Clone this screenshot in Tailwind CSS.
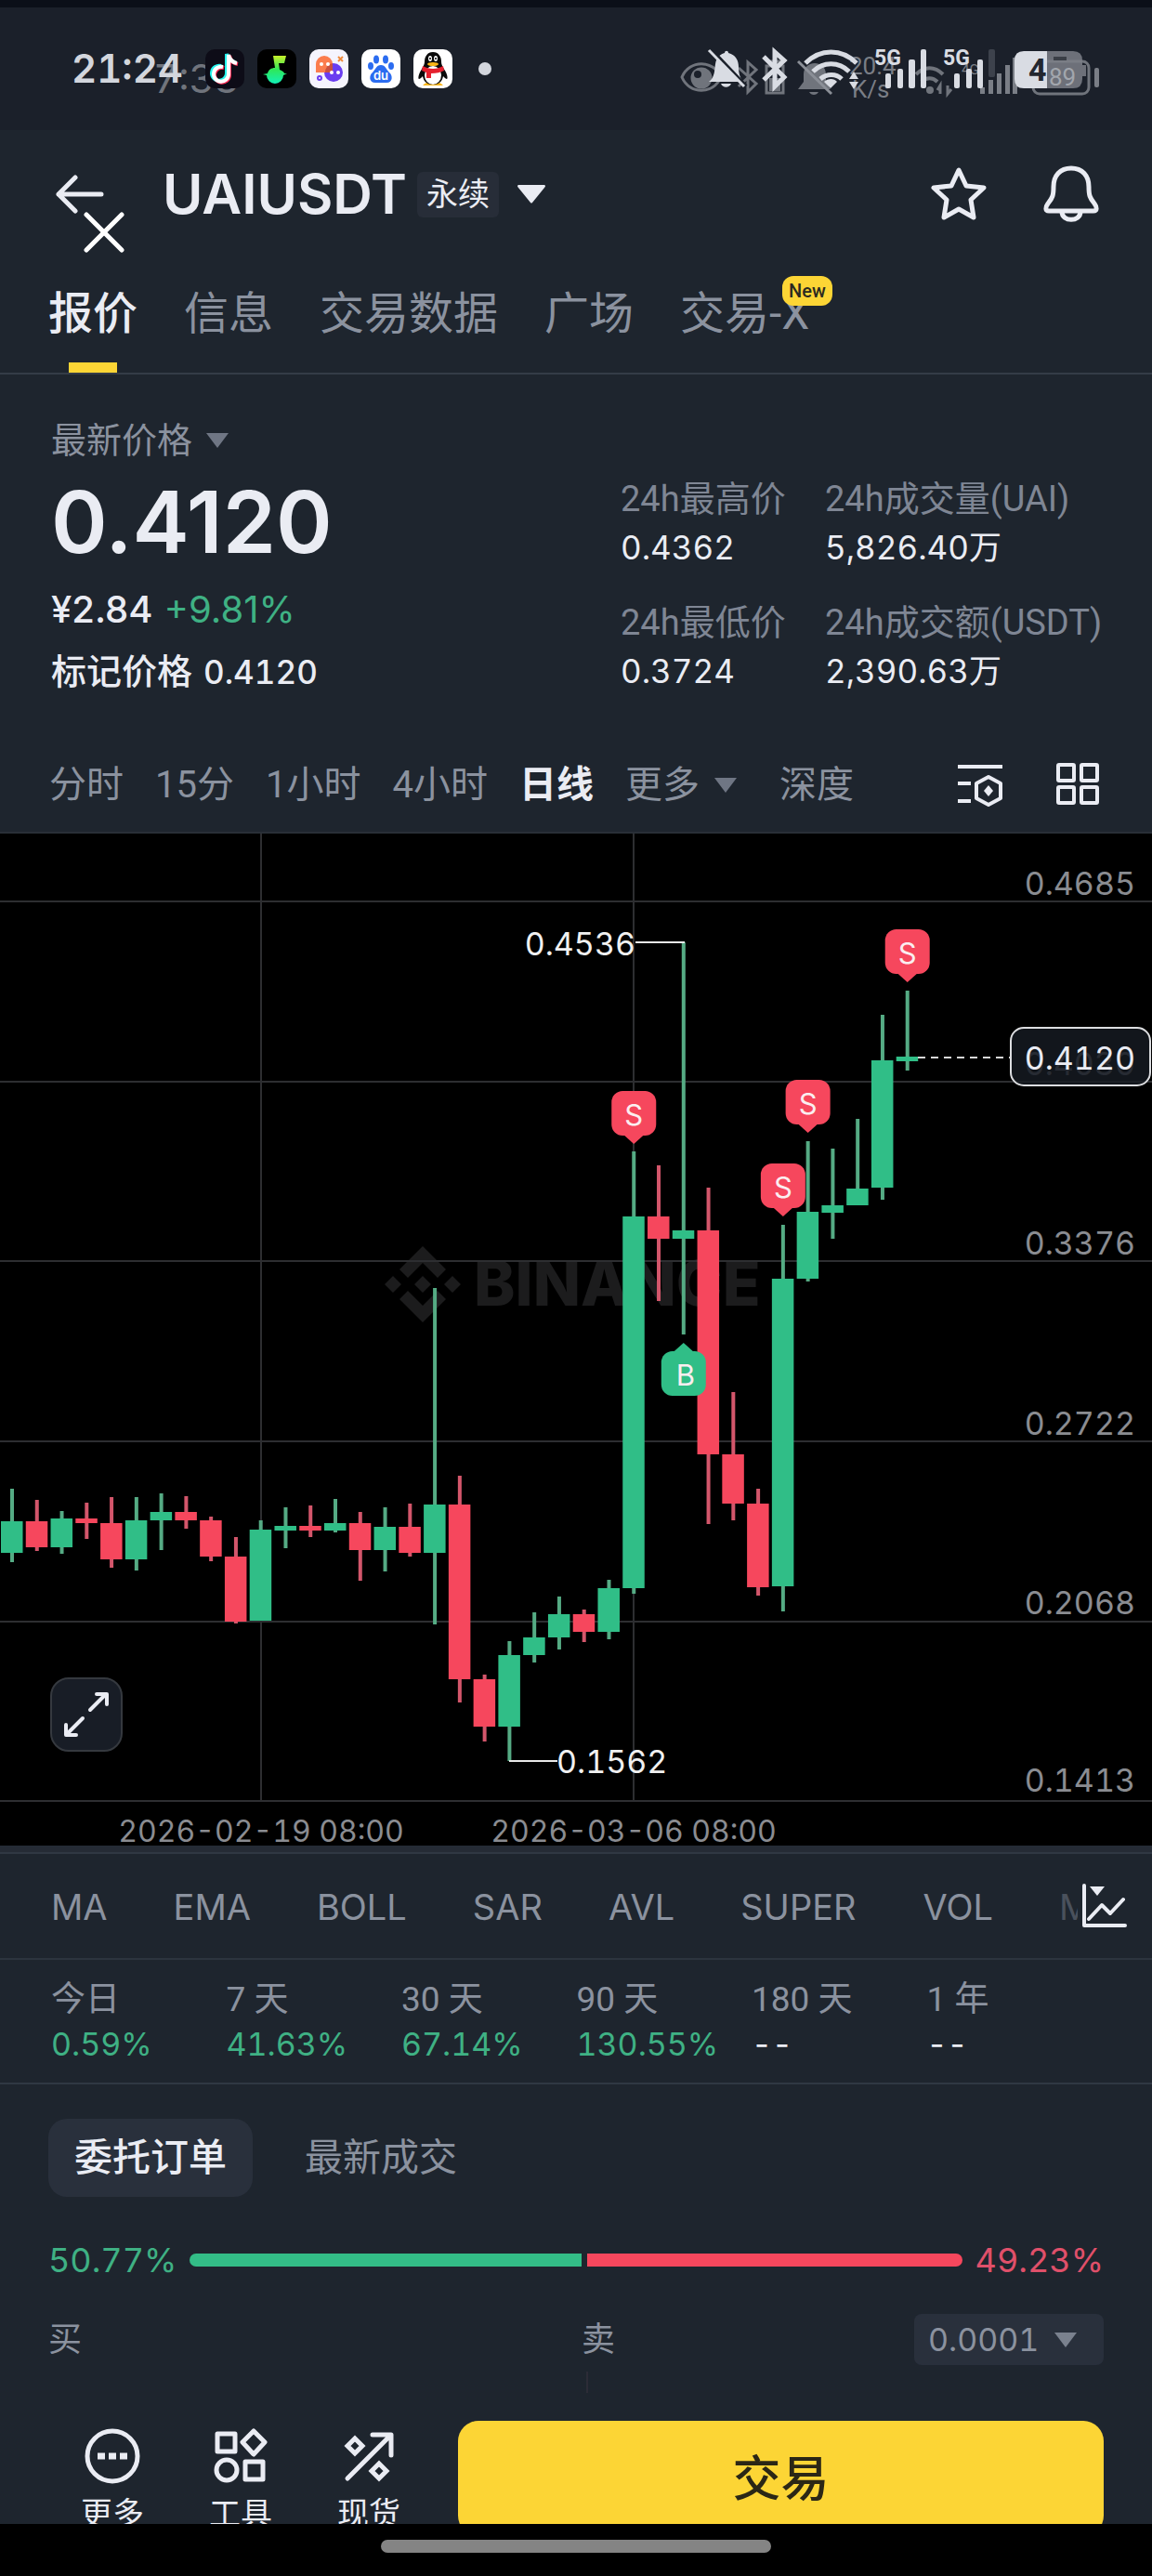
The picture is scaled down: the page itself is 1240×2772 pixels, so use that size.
<!DOCTYPE html>
<html lang="zh-CN">
<head>
  <meta charset="UTF-8">
  <meta name="viewport" content="width=device-width, initial-scale=1.0">
  <title>UAIUSDT 永续</title>
  <script src="https://cdn.jsdelivr.net/npm/@tailwindcss/browser@4"></script>
</head>
<body class="min-h-screen flex flex-col bg-[#1e252e] font-['Roboto','Noto_Sans_CJK_SC',sans-serif] text-[#eaecf3]">

  <!-- Status bar -->
  <div class="h-[140px] shrink-0 border-t-8 border-[#0b0f18] bg-[#1b202a] flex justify-between pl-[77px] pr-[50px] overflow-hidden">
    <div class="flex items-center relative h-[132px]">
      <span class="absolute left-[88px] top-[52px] text-[42px] leading-[50px] text-[#70747c] font-['Inter',sans-serif] tabular-nums">7:33</span>
      <span class="relative w-[144px] text-[42px] leading-[50px] font-semibold text-[#d3d6dd] font-['Inter',sans-serif] tabular-nums">21:24</span>
      <div class="relative flex items-center gap-[14px]">
        <svg class="w-[42px] h-[42px]" viewBox="0 0 42 42"><rect width="42" height="42" rx="10" fill="#0d0c17"/><g fill="none" stroke-width="4"><path d="M19 19a8 8 0 1 0 6 8V6c1 5 4 8 9 9" stroke="#25f4ee" transform="translate(-2 -1)"/><path d="M19 19a8 8 0 1 0 6 8V6c1 5 4 8 9 9" stroke="#fe2c55" transform="translate(1 1)"/><path d="M19 19a8 8 0 1 0 6 8V6c1 5 4 8 9 9" stroke="#fff"/></g></svg>
        <svg class="w-[42px] h-[42px]" viewBox="0 0 42 42"><defs><linearGradient id="note" x1="0" y1="0" x2="0" y2="1"><stop offset="0" stop-color="#c8f02a"/><stop offset=".5" stop-color="#2ee85a"/><stop offset="1" stop-color="#12f0b8"/></linearGradient></defs><rect width="42" height="42" rx="10" fill="#000"/><path d="M17 7h14l-2 8h-6l1 7c3 1 5 3 5 4h3l-4 2a9 9 0 0 1-18 0l-4-1 5-1c1-4 4-6 8-6z" fill="url(#note)"/></svg>
        <svg class="w-[42px] h-[42px]" viewBox="0 0 42 42"><rect width="42" height="42" rx="10" fill="#f5f4fd"/><circle cx="26" cy="25" r="10" fill="#6a3df0"/><path d="M7 25V16a9 9 0 0 1 18 0v5a4 4 0 0 1-4 4z" fill="#fb7d4e"/><path d="M17 25h4a4 4 0 0 0 4-4v-6a10 10 0 0 0-8 10z" fill="#c9503f"/><g fill="#fff"><circle cx="13" cy="16" r="2"/><circle cx="20" cy="16" r="2"/><circle cx="24" cy="25" r="2"/><circle cx="31" cy="25" r="2"/></g><path d="M31 8l5 5m0-5l-5 5" stroke="#f08a3c" stroke-width="2"/><circle cx="11" cy="31" r="2" fill="none" stroke="#6a3df0" stroke-width="2"/></svg>
        <svg class="w-[42px] h-[42px]" viewBox="0 0 42 42"><rect width="42" height="42" rx="10" fill="#fff"/><g fill="#2b6cf0"><ellipse cx="16" cy="11" rx="3" ry="4.500"/><ellipse cx="26" cy="11" rx="3" ry="4.500"/><ellipse cx="10" cy="18" rx="3" ry="4"/><ellipse cx="32" cy="18" rx="3" ry="4"/><path d="M21 17c5 0 6 5 9 8 4 3 4 11-3 11H15c-7 0-7-8-3-11 3-3 4-8 9-8z"/></g><text x="21" y="33" text-anchor="middle" font-family="Inter" font-weight="600" font-size="13" fill="#fff">du</text></svg>
        <svg class="w-[42px] h-[42px]" viewBox="0 0 42 42"><rect width="42" height="42" rx="10" fill="#fff"/><path d="M14 36c-5 3-5 3 0 3h14c5 0 5 0 0-3z" fill="#f9b519"/><path d="M21 3c6 0 9 5 9 10 0 3 1 5 4 10 3 5 3 9 2 9s-3-2-4-3c-1 6-5 9-11 9s-10-3-11-9c-1 1-3 3-4 3s-1-4 2-9c3-5 4-7 4-10 0-5 3-10 9-10z" fill="#0a0a0a"/><ellipse cx="21" cy="28" rx="9" ry="10" fill="#fff"/><path d="M10 18c7 4 15 4 22 0l1 5c-4 2-8 3-14 3v5h-5v-6l-5-2z" fill="#e5202e"/><ellipse cx="18" cy="10" rx="2" ry="3" fill="#fff"/><ellipse cx="24" cy="10" rx="2" ry="3" fill="#fff"/><circle cx="18" cy="10" r="1"/><circle cx="24" cy="10" r="1"/><ellipse cx="21" cy="16" rx="6" ry="2" fill="#f9b519"/></svg>
      </div>
      <span class="ml-[28px] w-[14px] h-[14px] rounded-full bg-[#d3d6dd]"></span>
    </div>

    <svg class="mt-[32px] w-[460px] h-[80px] shrink-0" viewBox="730 40 460 80" font-family="Roboto">
      <!-- dimmed row behind -->
      <g fill="none" stroke="#70747c" stroke-width="3">
        <path d="M734 83c8-19 34-19 42 0c-8 19-34 19-42 0z"/>
        <circle cx="755" cy="84" r="10" fill="#70747c"/>
        <circle cx="751" cy="80" r="4" fill="#1b202a" stroke="none"/>
        <path d="M795 73l19 17-9 9V67l9 8-19 18"/>
        <path d="M829 69v-3h10v3M825 71h18v29H825z"/>
        <path d="M828 84h12v14h-12z" fill="#70747c" stroke="none"/>
        <path d="M859 96h35l-5-8V80c0-16-24-16-24 0v8zM871 99c2 4 8 4 10 0" fill="#70747c" stroke="none"/>
        <path d="M859 66l36 35" stroke="#8b8f97"/>
        <path d="M986 80c9-9 20-9 29 0M992 88c5-5 12-5 17 0" stroke-width="4"/>
        <circle cx="1001" cy="97" r="4" fill="#70747c" stroke="none"/>
        <path d="M1012 101V92l-3 5M1020 92v9l4-5"/>
        <rect x="1112" y="66" width="60" height="35" rx="7"/>
      </g>
      <g fill="#7a7e86">
        <text x="914" y="80" font-size="26">20.4</text>
        <text x="917" y="105" font-size="26">K/s</text>
        <text x="1035" y="80" font-size="15">4G</text>
        <rect x="1055" y="94" width="5" height="7"/><rect x="1064" y="86" width="5" height="15"/><rect x="1073" y="79" width="5" height="22"/><rect x="1082" y="70" width="5" height="31"/><rect x="1090" y="62" width="5" height="39"/>
        <rect x="1064" y="53" width="7" height="30" rx="2" fill="#3d424c"/>
        <rect x="1178" y="73" width="5" height="21" rx="2"/>
      </g>
      <!-- bright row -->
      <g fill="#d9dce3">
        <path d="M763 88c7-5 6-14 7-19 1-8 6-11 10-12 0-3 4-3 4 0 8 2 11 8 11 15 0 8 2 11 4 16zM776 90h11c-2 5-9 5-11 0z"/>
        <path d="M765 53l38 40" stroke="#1b202a" stroke-width="4"/>
        <path d="M763 54l38 39" stroke="#d9dce3" stroke-width="3"/>
        <path d="M822 61l22 22-10 10V56l10 9-22 21" fill="none" stroke="#d9dce3" stroke-width="5"/>
        <g fill="none" stroke="#d9dce3" stroke-width="5"><path d="M867 68c16-16 39-16 55 0M875 77c11-11 28-11 39 0"/><path d="M883 85c7-6 17-6 23 0" /></g>
        <path d="M887 88c4-4 11-4 14 0l-7 7z"/>
        <path d="M914 85l5-8 5 8zM914 88h10l-5 8z"/>
        <text x="941" y="70" font-size="23" font-weight="700">5G</text>
        <rect x="953" y="79" width="6" height="16" rx="2"/><rect x="966" y="74" width="6" height="21" rx="2"/><rect x="978" y="64" width="7" height="31" rx="2"/><rect x="991" y="53" width="6" height="42" rx="2"/>
        <text x="1015" y="70" font-size="23" font-weight="700">5G</text>
        <rect x="1027" y="79" width="6" height="16" rx="2"/><rect x="1040" y="74" width="6" height="21" rx="2"/><rect x="1052" y="64" width="6" height="31" rx="2"/>
      </g>
      <path d="M1127 55h28q10 0 10 10v5h4v12h-4v3q0 10-10 10h-28z" fill="#7b7f87" opacity=".85"/>
      <path d="M1102 55h25v40h-25q-10 0-10-10V65q0-10 10-10z" fill="#d9dce3"/>
      <text x="1107" y="87" font-size="34" font-weight="700" fill="#23272f">4</text>
      <path d="M1134 63h14" stroke="#3a3e46" stroke-width="4"/>
      <text x="1129" y="92" font-size="26" fill="#a2a6ad">89</text>
    </svg>
  </div>

  <!-- Symbol header -->
  <header class="h-[138px] shrink-0 flex items-center pl-[60px] pr-[57px]">
    <div class="relative w-[115px]">
      <button aria-label="返回" class="block"><svg class="w-[52px] h-[42px]" viewBox="0 0 52 42" fill="none" stroke="#eaecf3" stroke-width="5" stroke-linecap="round" stroke-linejoin="round"><path d="M21 3L3 21l18 18M3 21h46"/></svg></button>
      <button aria-label="关闭" class="absolute left-[30px] top-[40px]"><svg class="w-[44px] h-[44px]" viewBox="0 0 44 44" stroke="#fff" stroke-width="5" stroke-linecap="round"><path d="M3 3l38 38M41 3L3 41"/></svg></button>
    </div>
    <button class="flex items-center">
      <span class="text-[59px] leading-[64px] font-semibold font-['Inter',sans-serif]">UAIUSDT</span>
      <span class="ml-[11px] h-[49px] px-[10px] rounded-md bg-[#272d38] text-[34px] leading-[48px]">永续</span>
      <svg class="ml-[20px] w-[30px] h-[20px]" viewBox="0 0 30 20"><path d="M1 0h28q2 1 0 3L16 19q-1 1-2 0L1 3q-2-2 0-3z" fill="#eaecf3"/></svg>
    </button>
    <div class="ml-auto flex items-center gap-[61px]">
      <button aria-label="收藏"><svg class="block w-[60px] h-[60px]" viewBox="0 0 60 60" fill="none" stroke="#eaecf3" stroke-width="5" stroke-linejoin="round"><path d="M30 4l8 17 19 2-14 13 3 19-16-9-16 9 3-19L3 23l19-2z"/></svg></button>
      <button aria-label="提醒"><svg class="block w-[60px] h-[62px]" viewBox="0 0 60 62" fill="none" stroke="#eaecf3" stroke-width="5" stroke-linejoin="round"><path d="M30 3c12 0 19 8 19 20 0 9 1 12 6 18 3 4 3 8-1 8H6c-4 0-4-4-1-8 5-6 6-9 6-18C11 11 18 3 30 3zM20 50c0 11 20 11 20 0"/></svg></button>
    </div>
  </header>

  <!-- Page tabs -->
  <nav class="shrink-0 flex gap-[50px] px-[52px] pt-[36px] border-b-2 border-[#343c47] text-[48px] leading-[48px] text-[#8b929f]">
    <a href="#" class="flex flex-col items-center text-[#eaecf3] font-medium">报价<span class="mt-[28px] w-[52px] h-[11px] bg-[#fcd535]"></span></a>
    <a href="#">信息</a>
    <a href="#">交易数据</a>
    <a href="#">广场</a>
    <a href="#" class="relative">交易-X<span class="absolute left-[110px] -top-[17px] h-[32px] px-[7px] rounded-xl bg-[#fcd535] text-[20px] leading-[32px] font-medium text-[#2b2a20]">New</span></a>
  </nav>

  <!-- Price summary -->
  <section class="shrink-0 flex pl-[55px] pt-[51px] text-[38px]">
    <div class="w-[613px]">
      <button class="flex items-center leading-[40px] text-[#8b929f]">最新价格<svg class="ml-[15px] w-[24px] h-[16px]" viewBox="0 0 24 16"><path d="M0 0h24L12 16z" fill="#6f7684"/></svg></button>
      <p class="mt-[22px] text-[92px] leading-[92px] font-semibold font-['Inter',sans-serif]">0.4120</p>
      <p class="mt-[26px] flex gap-[12px] text-[40px] leading-[44px] font-['Inter',sans-serif]"><span class="font-medium">¥2.84</span><span class="text-[#3fb184]">+9.81%</span></p>
      <p class="mt-[23px] flex gap-[12px] leading-[44px] font-medium">标记价格<span class="text-[35px] font-['Inter',sans-serif] tabular-nums">0.4120</span></p>
    </div>
    <dl class="pt-[63px] grid grid-cols-[220px_auto] gap-y-[41px] content-start leading-[40px] whitespace-nowrap">
      <div><dt class="text-[#7f8694]">24h最高价</dt><dd class="mt-[12px] text-[35px] font-['Inter','Noto_Sans_CJK_SC',sans-serif] tabular-nums">0.4362</dd></div>
      <div><dt class="text-[#7f8694]">24h成交量(UAI)</dt><dd class="mt-[12px] text-[35px] font-['Inter','Noto_Sans_CJK_SC',sans-serif] tabular-nums">5,826.40万</dd></div>
      <div><dt class="text-[#7f8694]">24h最低价</dt><dd class="mt-[12px] text-[35px] font-['Inter','Noto_Sans_CJK_SC',sans-serif] tabular-nums">0.3724</dd></div>
      <div><dt class="text-[#7f8694]">24h成交额(USDT)</dt><dd class="mt-[12px] text-[35px] font-['Inter','Noto_Sans_CJK_SC',sans-serif] tabular-nums">2,390.63万</dd></div>
    </dl>
  </section>

  <!-- Intervals -->
  <div class="shrink-0 mt-[76px] pb-[26px] pl-[53px] pr-[56px] flex items-center gap-[34px] border-b-2 border-[#292f37] text-[40px] leading-[48px] text-[#8b929f] whitespace-nowrap">
    <button>分时</button>
    <button>15分</button>
    <button>1小时</button>
    <button>4小时</button>
    <button class="font-bold text-[#eaecf3]">日线</button>
    <button class="flex items-center gap-[16px] mr-[12px]">更多<svg class="w-[24px] h-[16px]" viewBox="0 0 24 16"><path d="M0 0h24L12 16z" fill="#6f7684"/></svg></button>
    <button>深度</button>
    <button aria-label="图表设置" class="ml-auto mr-[22px]"><svg class="block w-[50px] h-[48px]" viewBox="0 0 50 48" fill="none" stroke="#eaecf3" stroke-width="4"><path d="M1 4h48M1 22h14M1 41h14M34 15l13 7v16l-13 7-13-7V22z" stroke-linejoin="round"/><path d="M34 24l5 6-5 6-5-6z" fill="#eaecf3" stroke="none"/></svg></button>
    <button aria-label="布局"><svg class="block w-[48px] h-[48px]" viewBox="0 0 48 48" fill="none" stroke="#eaecf3" stroke-width="4"><rect x="3" y="2" width="17" height="17" rx="1"/><rect x="28" y="2" width="17" height="17" rx="1"/><rect x="3" y="26" width="17" height="17" rx="1"/><rect x="28" y="26" width="17" height="17" rx="1"/></svg></button>
  </div>

  <!-- Candle chart -->
  <section class="relative shrink-0 bg-black">
    <svg class="block w-full h-auto tabular-nums" viewBox="0 897 1240 1089" font-family="Inter" font-size="34">
      <g fill="#1c1c1d">
        <path d="M455 1341l25 25-9 9-16-16-16 16-9-9zM423 1373l9 9-9 9-9-9zM487 1373l9 9-9 9-9-9zM455 1373l9 9-9 9-9-9zM430 1398l9-9 16 16 16-16 9 9-25 25z"/>
        <text x="510" y="1405" font-size="67" font-weight="800">BINANCE</text>
      </g>
      <path d="M0 970h1240M0 1164h1240M0 1357h1240M0 1551h1240M0 1745h1240M0 1938h1240M281 897v1041M682 897v1041" stroke="#2d2e31" stroke-width="2" fill="none"/>
      <g fill="#8a8c91" text-anchor="end">
        <text x="1222" y="963">0.4685</text>
        <text x="1222" y="1157" fill="#6a6c72">0.4030</text>
        <text x="1222" y="1350">0.3376</text>
        <text x="1222" y="1544">0.2722</text>
        <text x="1222" y="1737">0.2068</text>
        <text x="1222" y="1928">0.1413</text>
      </g>
      <g fill="#8a8c91" text-anchor="middle" font-size="32">
        <text x="281" y="1982">2026-02-19 08:00</text>
        <text x="682" y="1982">2026-03-06 08:00</text>
      </g>
      <g id="candles"></g>
      <path d="M684 1014h53M548 1895h52" stroke="#e8e8e8" stroke-width="2"/>
      <text x="684" y="1028" text-anchor="end" fill="#f0f0f0">0.4536</text>
      <text x="599" y="1908" fill="#f0f0f0">0.1562</text>
      <path d="M988 1138h100" stroke="#d8d8d8" stroke-width="2" stroke-dasharray="8 6"/>
      <rect x="1088" y="1106" width="150" height="62" rx="14" fill="#171b23" fill-opacity=".8" stroke="#dcdde0" stroke-width="2"/>
      <text x="1222" y="1151" text-anchor="end" fill="#eaecf3">0.4120</text>
      <g id="markers" text-anchor="middle" font-size="31"></g>
    </svg>
    <button aria-label="全屏" class="absolute left-[54px] bottom-[101px] w-[78px] h-[80px] rounded-[20px] border-2 border-[#35393f] bg-[#181d26] flex items-center justify-center">
      <svg class="w-[50px] h-[50px]" viewBox="0 0 50 50" fill="none" stroke="#eaecf3" stroke-width="4" stroke-linecap="round" stroke-linejoin="round"><path d="M29 20L46 3M36 3h11v11M21 29L4 46M14 47H3V36"/></svg>
    </button>
  </section>

  <!-- Indicators -->
  <div class="shrink-0 h-[9px] bg-[#252b35] border-b-2 border-[#303843]"></div>
  <div class="relative shrink-0 h-[114px] pl-[55px] pt-[3px] flex items-center gap-[71px] overflow-hidden border-b-2 border-[#2c343e] text-[38px] text-[#8b929f] font-['Inter',sans-serif]">
    <button>MA</button>
    <button>EMA</button>
    <button>BOLL</button>
    <button>SAR</button>
    <button>AVL</button>
    <button>SUPER</button>
    <span class="w-[2px] h-[42px] -mx-[35px] bg-[#323a45]"></span>
    <button>VOL</button>
    <button class="text-[#4a515c]">MACD</button>
    <button aria-label="指标" class="absolute right-0 top-0 h-full w-[80px] bg-[#1e252e]"><svg class="block ml-[4px] w-[50px] h-[50px]" viewBox="0 0 50 50" fill="none" stroke="#eaecf3" stroke-width="4" stroke-linecap="round" stroke-linejoin="round"><path d="M3 3v43h44M8 39l14-15 9 9 14-15"/><path d="M9 4h16l-8 10z" fill="#eaecf3" stroke="none"/></svg></button>
  </div>

  <!-- Performance -->
  <div class="shrink-0 pl-[55px] pr-[54px] pt-[23px] pb-[21px] border-b-2 border-[#303843]">
    <table class="w-full table-fixed text-left text-[37px] leading-[40px]">
      <thead class="text-[#8b929f]"><tr><th class="font-normal p-0 pb-[8px]">今日</th><th class="font-normal p-0 pb-[8px]">7 天</th><th class="font-normal p-0 pb-[8px]">30 天</th><th class="font-normal p-0 pb-[8px]">90 天</th><th class="font-normal p-0 pb-[8px]">180 天</th><th class="font-normal p-0 pb-[8px]">1 年</th></tr></thead>
      <tbody class="text-[34px] text-[#3fb184] font-['Inter',sans-serif] tabular-nums"><tr><td class="p-0">0.59%</td><td class="p-0">41.63%</td><td class="p-0">67.14%</td><td class="p-0">130.55%</td><td class="p-0 text-[#eaecf3]">--</td><td class="p-0 text-[#eaecf3]">--</td></tr></tbody>
    </table>
  </div>

  <!-- Order book -->
  <section class="shrink-0 px-[52px]">
    <div class="mt-[37px] flex text-[41px]">
      <button class="h-[84px] px-[28px] pt-[2px] rounded-[20px] bg-[#29303c] font-medium">委托订单</button>
      <button class="h-[84px] ml-[28px] px-[28px] pt-[2px] text-[#8b929f]">最新成交</button>
    </div>
    <div class="mt-[48px] flex items-center gap-[14px] text-[36px] leading-[40px] font-['Inter',sans-serif] tabular-nums">
      <span class="text-[#3fb184]">50.77%</span>
      <div class="flex-1 flex gap-[6px] h-[14px]">
        <div class="rounded-l-full bg-[#33bd87]" style="width: 50.77%"></div>
        <div class="flex-1 rounded-r-full bg-[#f6475d]"></div>
      </div>
      <span class="text-[#e0506a]">49.23%</span>
    </div>
    <div class="mt-[38px] flex items-center h-[55px] text-[36px] text-[#8b929f]">
      <span class="flex-1">买</span>
      <div class="flex-1 flex items-center justify-between pl-[12px]">
        <span>卖</span>
        <label class="relative block">
          <select aria-label="价格精度" class="appearance-none w-[204px] h-[55px] pl-[15px] rounded-lg bg-[#29303c] text-[34px] font-['Inter',sans-serif] tabular-nums"><option>0.0001</option><option>0.001</option></select>
          <svg class="absolute right-[29px] top-[20px] w-[24px] h-[16px] pointer-events-none" viewBox="0 0 24 16"><path d="M0 0h24L12 16z" fill="#7a818e"/></svg>
        </label>
      </div>
    </div>
    <div class="mt-[7px] w-[2px] h-[23px] mx-auto bg-[#2c2c37] translate-x-[12px]"></div>
  </section>

  <!-- Bottom actions -->
  <nav class="shrink-0 mt-[30px] h-[111px] overflow-hidden flex items-start px-[52px] text-[34px] leading-[40px]">
    <button class="w-[138px] pt-[8px] flex flex-col items-center gap-[12px]">
      <svg class="w-[60px] h-[60px]" viewBox="0 0 60 60" fill="none" stroke="#eaecf3" stroke-width="5"><circle cx="30" cy="30" r="27"/><path d="M14 30h8M26 30h8M38 30h8" stroke-width="7"/></svg>更多
    </button>
    <button class="w-[138px] pt-[8px] flex flex-col items-center gap-[12px]">
      <svg class="w-[60px] h-[60px]" viewBox="0 0 60 60" fill="none" stroke="#eaecf3" stroke-width="5" stroke-linejoin="round"><rect x="5" y="6" width="19" height="19"/><path d="M44 3l12 12-12 13-12-13z"/><circle cx="15" cy="45" r="11"/><rect x="35" y="36" width="19" height="19"/></svg>工具
    </button>
    <button class="w-[138px] pt-[8px] flex flex-col items-center gap-[12px]">
      <svg class="w-[60px] h-[60px]" viewBox="0 0 60 60" fill="none" stroke="#eaecf3" stroke-width="5" stroke-linecap="round" stroke-linejoin="round"><path d="M7 54L53 8M34 7h20v22"/><path d="M15 11l8 8-8 8-8-8zM41 38l8 8-8 8-8-8z" stroke-linejoin="miter"/></svg>现货
    </button>
    <button class="flex-1 ml-[27px] h-[124px] pt-[3px] rounded-[22px] bg-[#fcd535] text-[52px] font-medium text-[#2b2716]">交易</button>
  </nav>
  <footer class="h-[56px] shrink-0 bg-black flex justify-center items-start pt-[17px]">
    <span class="w-[420px] h-[14px] rounded-full bg-[#848484]"></span>
  </footer>

  <script>
    // [up, high, body top, body bottom, low] in chart coordinates
    const candles = [
      [1, 1602, 1637, 1671, 1681], [0, 1614, 1637, 1665, 1669], [1, 1626, 1634, 1665, 1672], [0, 1617, 1634, 1639, 1656],
      [0, 1611, 1639, 1678, 1687], [1, 1611, 1636, 1678, 1690], [1, 1607, 1627, 1636, 1668], [0, 1610, 1627, 1636, 1645],
      [0, 1632, 1636, 1675, 1680], [0, 1654, 1675, 1745, 1747], [1, 1636, 1646, 1744, 1744], [1, 1622, 1642, 1647, 1666],
      [0, 1620, 1642, 1647, 1654], [1, 1613, 1639, 1647, 1649], [0, 1627, 1639, 1668, 1701], [1, 1622, 1643, 1668, 1691],
      [0, 1618, 1643, 1671, 1675], [1, 1386, 1619, 1671, 1748], [0, 1588, 1619, 1807, 1832], [0, 1802, 1807, 1858, 1874],
      [1, 1766, 1781, 1858, 1895], [1, 1735, 1762, 1781, 1789], [1, 1718, 1737, 1762, 1775], [0, 1732, 1737, 1756, 1767],
      [1, 1700, 1709, 1756, 1764], [1, 1239, 1309, 1709, 1715], [0, 1254, 1309, 1333, 1400], [1, 1014, 1324, 1333, 1436],
      [0, 1278, 1324, 1565, 1640], [0, 1498, 1565, 1618, 1636], [0, 1602, 1618, 1708, 1717], [1, 1318, 1376, 1707, 1734],
      [1, 1228, 1304, 1376, 1379], [1, 1236, 1297, 1305, 1333], [1, 1204, 1279, 1297, 1297], [1, 1092, 1141, 1278, 1291],
      [1, 1066, 1137, 1142, 1152]
    ];
    const xOf = i => 13 + i * 26.77;

    document.getElementById("candles").innerHTML = candles.map(([up, high, top, bottom, low], i) => `
      <rect x="${xOf(i) - 2}" y="${high}" width="4" height="${low - high}" fill="${up ? "#55ab84" : "#d3566b"}"/>
      <rect x="${xOf(i) - 12}" y="${top}" width="23.500" height="${bottom - top}" fill="${up ? "#30be87" : "#f6475d"}"/>
    `).join("");

    // Trade markers: candle index, y of the box, side
    const markers = [[25, 1174, "S"], [31, 1252, "S"], [32, 1162, "S"], [36, 1000, "S"], [27, 1454, "B"]];
    document.getElementById("markers").innerHTML = markers.map(([i, y, side]) => {
      const x = xOf(i);
      const color = side === "S" ? "#f6475d" : "#30be87";
      const tip = side === "S" ? `M${x - 10} ${y + 48}h20l-10 9z` : `M${x - 10} ${y}h20l-10 -9z`;
      return `<rect x="${x - 24}" y="${y}" width="48" height="48" rx="12" fill="${color}"/>
        <path d="${tip}" fill="${color}"/>
        <text x="${side === "S" ? x : x + 2}" y="${y + 37}" fill="#fbeef0">${side}</text>`;
    }).join("");
  </script>
</body>
</html>
